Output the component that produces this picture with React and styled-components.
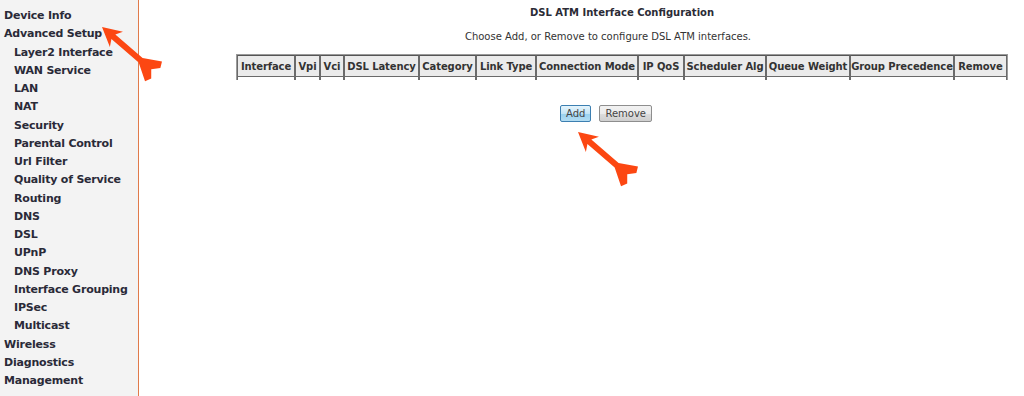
import React from "react";
import styled, { createGlobalStyle } from "styled-components";

const GlobalStyle = createGlobalStyle`
  html, body {
    margin: 0;
    padding: 0;
    background: #ffffff;
  }
  body {
    font-family: "DejaVu Sans", Verdana, sans-serif;
    color: #2b2b36;
  }
`;

const StPage = styled.div`
  position: relative;
  display: flex;
  width: 1024px;
  height: 396px;
  overflow: hidden;
`;

const StSide = styled.div`
  width: 138px;
  flex-shrink: 0;
  background: #f3f3f3;
  border-right: 1px solid #e07a4a;
  padding-top: 7px;
  box-sizing: content-box;
`;

const StMenuItem = styled.div`
  font-size: 11px;
  font-weight: bold;
  letter-spacing: -0.2px;
  line-height: 18.25px;
  white-space: nowrap;
  padding-left: ${(props) => (props.sub ? "14px" : "4px")};
  color: #2a2a38;
`;

const StMain = styled.div`
  margin-left: 98px;
  width: 770px;
  display: flex;
  flex-direction: column;
  align-items: center;
`;

const StTitle = styled.div`
  font-size: 10px;
  font-weight: bold;
  margin-top: 6px;
  line-height: 13px;
`;

const StSub = styled.div`
  font-size: 10px;
  margin-top: 11px;
  line-height: 13px;
  padding-right: 28px;
  color: #333;
`;

const StTable = styled.table`
  margin-top: 11px;
  width: 770px;
  table-layout: fixed;
  border-collapse: separate;
  border-spacing: 0;
  border: 1px solid #9a9a9a;
  border-bottom: none;
`;

const StTh = styled.th`
  font-size: 10px;
  font-weight: bold;
  letter-spacing: -0.1px;
  background: #ebebeb;
  border: 1px solid #6a6a6a;
  border-top-color: #555;
  height: 20px;
  padding: 0;
  white-space: nowrap;
  text-align: center;
  color: #333;
`;

const StTd = styled.td`
  height: 3px;
  padding: 0;
  border-left: 1px solid #6a6a6a;
  border-right: 1px solid #6a6a6a;
`;

const StBtnRow = styled.div`
  display: flex;
  gap: 8px;
  margin-top: 25px;
  padding-right: 32px;
`;

const StBtn = styled.button`
  font-family: "DejaVu Sans", Verdana, sans-serif;
  font-size: 10px;
  height: 17px;
  padding: 0 5px;
  border-radius: 2px;
  color: #444;
  border: 1px solid ${(props) => (props.primary ? "#3c7fb1" : "#8e8e8e")};
  background: ${(props) =>
    props.primary
      ? "linear-gradient(#e5f4fc, #c4e5f6 50%, #98d1ef 51%, #b3dcf2)"
      : "linear-gradient(#f2f2f2, #ebebeb 50%, #dddddd 51%, #cfcfcf)"};
  line-height: 15px;
`;

const StOverlay = styled.svg`
  position: absolute;
  left: 0;
  top: 0;
  pointer-events: none;
`;

const menu = [
  ["Device Info", false],
  ["Advanced Setup", false],
  ["Layer2 Interface", true],
  ["WAN Service", true],
  ["LAN", true],
  ["NAT", true],
  ["Security", true],
  ["Parental Control", true],
  ["Url Filter", true],
  ["Quality of Service", true],
  ["Routing", true],
  ["DNS", true],
  ["DSL", true],
  ["UPnP", true],
  ["DNS Proxy", true],
  ["Interface Grouping", true],
  ["IPSec", true],
  ["Multicast", true],
  ["Wireless", false],
  ["Diagnostics", false],
  ["Management", false],
];

const columns = [
  ["Interface", 58],
  ["Vpi", 25],
  ["Vci", 24],
  ["DSL Latency", 75],
  ["Category", 57],
  ["Link Type", 60],
  ["Connection Mode", 102],
  ["IP QoS", 46],
  ["Scheduler Alg", 82],
  ["Queue Weight", 84],
  ["Group Precedence", 104],
  ["Remove", 53],
];

function Arrow({ tip, tail }) {
  const dx = tail[0] - tip[0];
  const dy = tail[1] - tip[1];
  const L = Math.sqrt(dx * dx + dy * dy);
  const a = (Math.atan2(dy, dx) * 180) / Math.PI;
  const d = `M0 0 L19 -10 L15 -3 H${L - 15} L${L + 2} -13 L${L + 5} -7 L${
    L - 1
  } 0 L${L + 5} 7 L${L + 2} 13 L${L - 15} 3 H15 L19 10 Z`;
  return (
    <path
      d={d}
      fill="#fc4712"
      transform={`translate(${tip[0]} ${tip[1]}) rotate(${a})`}
    />
  );
}

function App() {
  return (
    <StPage>
      <GlobalStyle />
      <StSide>
        {menu.map(([label, sub]) => (
          <StMenuItem key={label} sub={sub}>
            {label}
          </StMenuItem>
        ))}
      </StSide>
      <StMain>
        <StTitle>DSL ATM Interface Configuration</StTitle>
        <StSub>Choose Add, or Remove to configure DSL ATM interfaces.</StSub>
        <StTable>
          <colgroup>
            {columns.map(([label, w]) => (
              <col key={label} style={{ width: w }} />
            ))}
          </colgroup>
          <thead>
            <tr>
              {columns.map(([label]) => (
                <StTh key={label}>{label}</StTh>
              ))}
            </tr>
          </thead>
          <tbody>
            <tr>
              {columns.map(([label]) => (
                <StTd key={label} />
              ))}
            </tr>
          </tbody>
        </StTable>
        <StBtnRow>
          <StBtn primary>Add</StBtn>
          <StBtn>Remove</StBtn>
        </StBtnRow>
      </StMain>
      <StOverlay width="1024" height="396">
        <Arrow tip={[102, 27]} tail={[152, 70]} />
        <Arrow tip={[578, 132]} tail={[628, 175]} />
      </StOverlay>
    </StPage>
  );
}

export default App;
